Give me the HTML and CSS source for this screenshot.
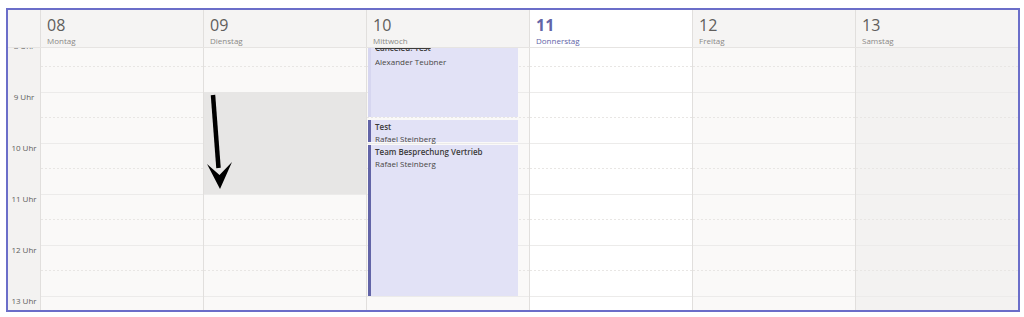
FILE: index.html
```html
<!DOCTYPE html>
<html lang="de">
<head>
    <meta charset="UTF-8">
    <title>Kalender</title>
    <link rel="stylesheet" href="styles.css">
</head>
<body>
    <div class="frame">
        <div class="header">
            <div class="gutter-head"></div>
            <div class="day-head"><div class="num">08</div><div class="name">Montag</div></div>
            <div class="day-head"><div class="num">09</div><div class="name">Dienstag</div></div>
            <div class="day-head"><div class="num">10</div><div class="name">Mittwoch</div></div>
            <div class="day-head today"><div class="num">11</div><div class="name">Donnerstag</div></div>
            <div class="day-head"><div class="num">12</div><div class="name">Freitag</div></div>
            <div class="day-head"><div class="num">13</div><div class="name">Samstag</div></div>
        </div>
        <div class="body">
            <div class="grid">
                <div class="gutter">
                    <div class="hour"><span>8 Uhr</span></div>
                    <div class="hour"><span>9 Uhr</span></div>
                    <div class="hour"><span>10 Uhr</span></div>
                    <div class="hour"><span>11 Uhr</span></div>
                    <div class="hour"><span>12 Uhr</span></div>
                    <div class="hour"><span>13 Uhr</span></div>
                </div>
                <div class="day"></div>
                <div class="day">
                    <!-- 9:00 - 11:00 selected -->
                    <div class="selection" style="top:51px;height:102px"></div>
                </div>
                <div class="day">
                    <div class="event canceled" style="top:1px;height:75px">
                        <div class="title">Canceled: Test</div>
                        <div class="who">Alexander Teubner</div>
                    </div>
                    <div class="event" style="top:79px;height:22px">
                        <div class="title">Test</div>
                        <div class="who">Rafael Steinberg</div>
                    </div>
                    <div class="event" style="top:104px;height:151px">
                        <div class="title">Team Besprechung Vertrieb</div>
                        <div class="who">Rafael Steinberg</div>
                    </div>
                </div>
                <div class="day today"></div>
                <div class="day"></div>
                <div class="day weekend"></div>
            </div>
        </div>
        <svg class="arrow" width="40" height="110" viewBox="0 0 40 110">
            <line x1="10" y1="7" x2="15.5" y2="80" stroke="#000" stroke-width="4.5"/>
            <polygon points="4,76 16.5,87 29,74 17,101" fill="#000"/>
        </svg>
    </div>
</body>
</html>
```

FILE: styles.css
```css
html, body {
    margin: 0;
    padding: 0;
    background: #fff;
}
body {
    font-family: 'Open Sans', 'Noto Sans', sans-serif;
    color: #252423;
}
.frame {
    position: relative;
    margin: 8px 0 0 6px;
    width: 1010px;
    height: 300px;
    border: 2px solid #6b6ec9;
    overflow: hidden;
    background: #faf9f8;
}
.header, .grid {
    display: grid;
    grid-template-columns: 33px repeat(5, 163px) 1fr;
}
.header {
    height: 37px;
    background: #f5f4f3;
    border-bottom: 1px solid #e6e4e2;
    position: relative;
    z-index: 2;
}
.gutter-head {
    border-right: 1px solid #e1dfdd;
}
.day-head {
    border-right: 1px solid #e1dfdd;
    padding: 5px 0 0 6px;
}
.day-head:last-child {
    border-right: none;
}
.day-head .num {
    font-size: 16px;
    line-height: 20px;
    color: #605e5c;
}
.day-head .name {
    font-size: 8px;
    line-height: 11px;
    color: #8a8886;
}
.day-head.today {
    background: #fff;
}
.day-head.today .num {
    color: #6264a7;
    font-weight: 700;
}
.day-head.today .name {
    color: #6264a7;
}
.body {
    height: 262px;
    overflow: hidden;
}
.grid {
    margin-top: -7px;
    height: 306px;
}
.gutter {
    background: #f3f2f1;
    border-right: 1px solid #e1dfdd;
}
.hour {
    height: 51px;
    text-align: center;
    font-size: 8px;
    line-height: 10px;
    color: #605e5c;
}
.day {
    position: relative;
    border-right: 1px solid #e1dfdd;
    background: #faf9f8;
}
/* solid hour lines */
.day::before {
    content: "";
    position: absolute;
    inset: 0;
    background: repeating-linear-gradient(180deg, #ecebea 0 1px, transparent 1px 51px);
}
/* dotted half hour lines */
.day::after {
    content: "";
    position: absolute;
    inset: 0;
    background: repeating-linear-gradient(90deg, #e8e6e4 0 2px, transparent 2px 4px);
    -webkit-mask: repeating-linear-gradient(180deg, transparent 0 25px, #000 25px 26px, transparent 26px 51px);
    mask: repeating-linear-gradient(180deg, transparent 0 25px, #000 25px 26px, transparent 26px 51px);
}
.day:last-child {
    border-right: none;
}
.day.today {
    background: #fff;
}
.day.weekend {
    background: #f3f2f1;
}
.selection {
    position: absolute;
    left: 0;
    right: 0;
    background: #e7e6e5;
    z-index: 1;
}
.event {
    position: absolute;
    left: 1px;
    right: 11px;
    background: #e2e2f6;
    border-left: 3px solid #6264a7;
    padding: 1px 0 0 4px;
    box-sizing: border-box;
    z-index: 1;
}
.event.canceled {
    border-left: 3px solid #d6d6f0;
    padding-top: 0;
}
.event .title {
    font-size: 8px;
    line-height: 11px;
    font-weight: 600;
    color: #3b3a39;
}
.event.canceled .title {
    text-decoration: line-through;
}
.event .who {
    font-size: 8px;
    line-height: 13px;
    color: #484644;
}
.event.canceled .who {
    margin-top: 2px;
}
.arrow {
    position: absolute;
    left: 195px;
    top: 78px;
    z-index: 3;
}
```
